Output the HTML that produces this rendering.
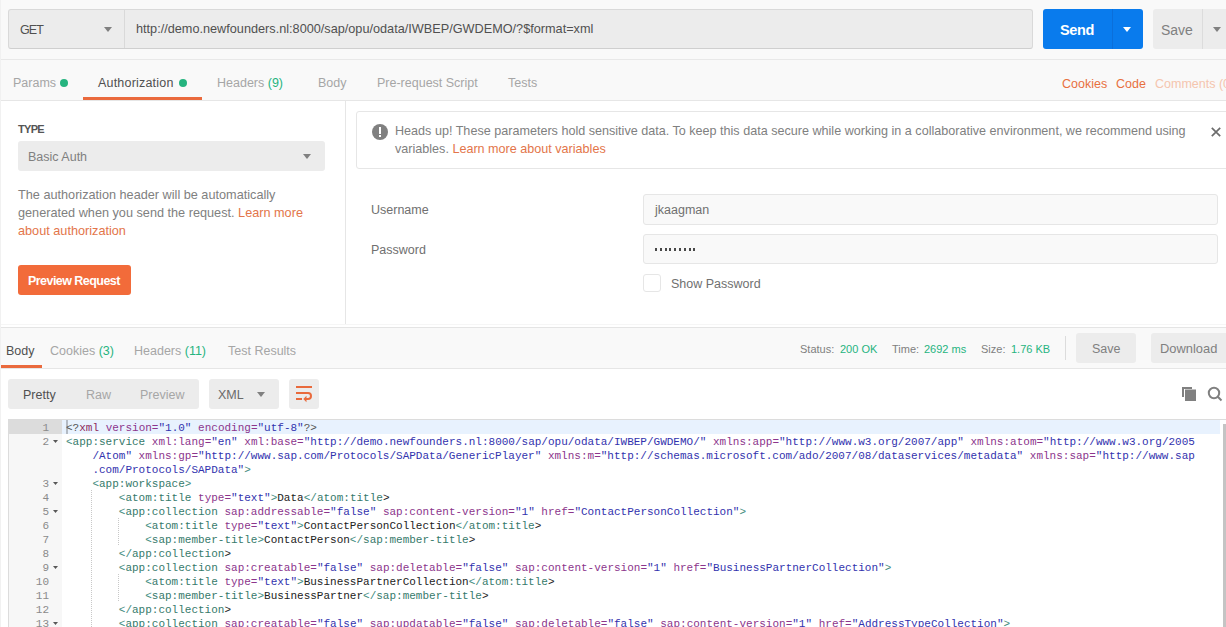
<!DOCTYPE html>
<html><head><meta charset="utf-8">
<style>
*{box-sizing:border-box;margin:0;padding:0}
html,body{width:1226px;height:627px;overflow:hidden;background:#fff}
body{position:relative;font-family:"Liberation Sans",sans-serif;font-size:12.5px;color:#505050}
.a{position:absolute}
.t{position:absolute;white-space:pre;line-height:1}
.bd{position:absolute;background:#e6e6e6}
.green{color:#26b47f}
.orange{color:#e3754a}

#code{position:absolute;left:0;top:0;width:1218px;height:208px;font-family:"Liberation Mono",monospace;font-size:11px;line-height:14px}
.gl{position:absolute;left:0;width:40px;height:14px;padding-top:1px;text-align:right;color:#8a8a8a}
.fw{position:absolute;left:44px;width:5px;height:3px;background:#585858;clip-path:polygon(0 0,100% 0,50% 100%)}
.ln{position:absolute;height:14px;padding-top:1px;white-space:pre;color:#222}
.ig{position:absolute;width:1px;height:14px;background:repeating-linear-gradient(to bottom,#c8c8c8 0,#c8c8c8 1px,transparent 1px,transparent 2px)}
.p{color:#3f8c7e}
.tag{color:#367a6b}
.pi{color:#555}
.decl{color:#8e2a5c}
.at{color:#8c358c}
.eq{color:#8c358c}
.st{color:#3232ae}
.tx{color:#222}
</style></head><body>

<!-- top bar -->
<div class="a" style="left:0;top:0;width:1226px;height:59px;background:#f9f9f9"></div>
<div class="a" style="left:0;top:0;width:1px;height:627px;background:#f0f0f0"></div>
<div class="bd" style="left:0;top:59px;width:1226px;height:1px;background:#e8e8e8"></div>
<!-- GET + url -->
<div class="a" style="left:8px;top:9px;width:1025px;height:40px;background:#ececec;border:1px solid #d9d9d9;border-bottom-color:#cfcfcf;border-radius:3px"></div>
<div class="a" style="left:124px;top:10px;width:1px;height:38px;background:#d9d9d9"></div>
<div class="t" style="left:20px;top:24px;font-size:12.5px;letter-spacing:-0.9px;color:#505050">GET</div>
<div class="a" style="left:104px;top:27px;width:0;height:0;border-left:4px solid transparent;border-right:4px solid transparent;border-top:5px solid #808080"></div>
<div class="t" style="left:136px;top:23px;font-size:12.7px;color:#505050">http://demo.newfounders.nl:8000/sap/opu/odata/IWBEP/GWDEMO/?$format=xml</div>
<!-- send -->
<div class="a" style="left:1043px;top:9px;width:100px;height:40px;background:#097bed;border-radius:3px"></div>
<div class="a" style="left:1112px;top:9px;width:1px;height:40px;background:#0b6fda"></div>
<div class="t" style="left:1060px;top:23px;font-size:14.5px;letter-spacing:-0.4px;font-weight:700;color:#fff">Send</div>
<div class="a" style="left:1123px;top:27px;width:0;height:0;border-left:4px solid transparent;border-right:4px solid transparent;border-top:5px solid #fff"></div>
<!-- save -->
<div class="a" style="left:1153px;top:9px;width:80px;height:40px;background:#ececec;border-radius:3px"></div>
<div class="a" style="left:1202px;top:9px;width:1px;height:40px;background:#dcdcdc"></div>
<div class="t" style="left:1161px;top:23px;font-size:14px;color:#808080">Save</div>
<div class="a" style="left:1213px;top:27px;width:0;height:0;border-left:4px solid transparent;border-right:4px solid transparent;border-top:5px solid #808080"></div>

<!-- request tabs -->
<div class="a" style="left:0;top:60px;width:1226px;height:40px;background:#f9f9f9"></div>
<div class="bd" style="left:0;top:100px;width:1226px;height:1px;background:#e6e6e6"></div>
<div class="t" style="left:13px;top:77px;color:#a6a6a6">Params</div>
<div class="a" style="left:60px;top:79px;width:8px;height:8px;border-radius:50%;background:#26b47f"></div>
<div class="t" style="left:98px;top:77px;letter-spacing:0.2px;color:#505050">Authorization</div>
<div class="a" style="left:179px;top:79px;width:8px;height:8px;border-radius:50%;background:#26b47f"></div>
<div class="a" style="left:83px;top:97px;width:119px;height:3px;background:#ea6a3d"></div>
<div class="t" style="left:217px;top:77px;color:#a6a6a6">Headers <span class="green">(9)</span></div>
<div class="t" style="left:318px;top:77px;color:#a6a6a6">Body</div>
<div class="t" style="left:377px;top:77px;color:#a6a6a6">Pre-request Script</div>
<div class="t" style="left:508px;top:77px;color:#a6a6a6">Tests</div>
<div class="t" style="left:1062px;top:78px;color:#e8703f">Cookies</div>
<div class="t" style="left:1116px;top:78px;color:#e8703f">Code</div>
<div class="t" style="left:1155px;top:78px;color:#f5c5ae">Comments (0)</div>

<!-- auth left panel -->
<div class="a" style="left:345px;top:101px;width:1px;height:224px;background:#e6e6e6"></div>
<div class="t" style="left:18px;top:124px;font-size:11px;font-weight:700;letter-spacing:-0.7px;color:#555">TYPE</div>
<div class="a" style="left:18px;top:141px;width:307px;height:30px;background:#ececec;border-radius:3px"></div>
<div class="t" style="left:28px;top:151px;color:#808080">Basic Auth</div>
<div class="a" style="left:303px;top:154px;width:0;height:0;border-left:4px solid transparent;border-right:4px solid transparent;border-top:5px solid #808080"></div>
<div class="a" style="left:18px;top:186px;width:320px;font-size:12.7px;line-height:18px;color:#808080;white-space:pre">The authorization header will be automatically
generated when you send the request. <span class="orange">Learn more</span>
<span class="orange">about authorization</span></div>
<div class="a" style="left:18px;top:265px;width:113px;height:30px;background:#f26b3a;border-radius:3px"></div>
<div class="t" style="left:28px;top:275px;font-size:12.5px;letter-spacing:-0.55px;font-weight:700;color:#fff">Preview Request</div>

<!-- warning -->
<div class="a" style="left:356px;top:111px;width:880px;height:58px;border:1px solid #e6e6e6;border-radius:3px;background:#fff"></div>
<div class="a" style="left:372px;top:124px;width:16px;height:16px;border-radius:50%;background:#808080"></div>
<div class="a" style="left:379px;top:127px;width:2px;height:7px;background:#fff"></div>
<div class="a" style="left:379px;top:135px;width:2px;height:2px;background:#fff"></div>
<div class="a" style="left:395px;top:122px;font-size:12.6px;line-height:18px;color:#808080;white-space:pre">Heads up! These parameters hold sensitive data. To keep this data secure while working in a collaborative environment, we recommend using
variables. <span class="orange">Learn more about variables</span></div>
<svg class="a" style="left:1210px;top:126px" width="12" height="12" viewBox="0 0 12 12"><path d="M1.8 1.8L10.2 10.2M10.2 1.8L1.8 10.2" stroke="#6c6c6c" stroke-width="1.7"/></svg>

<!-- form -->
<div class="t" style="left:371px;top:204px;color:#707070">Username</div>
<div class="t" style="left:371px;top:244px;color:#707070">Password</div>
<div class="a" style="left:643px;top:194px;width:575px;height:31px;background:#f9f9f9;border:1px solid #e6e6e6;border-radius:3px"></div>
<div class="t" style="left:655px;top:204px;color:#707070">jkaagman</div>
<div class="a" style="left:643px;top:234px;width:575px;height:30px;background:#f9f9f9;border:1px solid #e6e6e6;border-radius:3px"></div>

<div class="a" style="left:655px;top:248px;width:2px;height:3px;background:#484848"></div><div class="a" style="left:660px;top:248px;width:2px;height:3px;background:#484848"></div><div class="a" style="left:665px;top:248px;width:2px;height:3px;background:#484848"></div><div class="a" style="left:669px;top:248px;width:2px;height:3px;background:#484848"></div><div class="a" style="left:674px;top:248px;width:2px;height:3px;background:#484848"></div><div class="a" style="left:679px;top:248px;width:2px;height:3px;background:#484848"></div><div class="a" style="left:684px;top:248px;width:2px;height:3px;background:#484848"></div><div class="a" style="left:689px;top:248px;width:2px;height:3px;background:#484848"></div><div class="a" style="left:693px;top:248px;width:2px;height:3px;background:#484848"></div>
<div class="a" style="left:643px;top:274px;width:18px;height:18px;border:1px solid #e6e6e6;border-radius:3px;background:#fff"></div>
<div class="t" style="left:671px;top:278px;color:#707070">Show Password</div>

<!-- response header -->
<div class="a" style="left:0;top:324px;width:1226px;height:1px;background:#f6f6f6"></div>
<div class="bd" style="left:0;top:327px;width:1226px;height:1px;background:#e4e4e4"></div>
<div class="a" style="left:0;top:328px;width:1226px;height:40px;background:#f9f9f9"></div>
<div class="bd" style="left:0;top:368px;width:1226px;height:1px;background:#e6e6e6"></div>
<div class="t" style="left:6px;top:345px;color:#505050">Body</div>
<div class="a" style="left:0;top:365px;width:42px;height:3px;background:#ea6a3d"></div>
<div class="t" style="left:50px;top:345px;color:#a6a6a6">Cookies <span class="green">(3)</span></div>
<div class="t" style="left:134px;top:345px;color:#a6a6a6">Headers <span class="green">(11)</span></div>
<div class="t" style="left:228px;top:345px;color:#a6a6a6">Test Results</div>

<div class="t" style="left:800px;top:344px;font-size:11px;color:#808080">Status:</div>
<div class="t" style="left:840px;top:344px;font-size:11px;color:#26b47f">200 OK</div>
<div class="t" style="left:892px;top:344px;font-size:11px;color:#808080">Time:</div>
<div class="t" style="left:924px;top:344px;font-size:11px;color:#26b47f">2692 ms</div>
<div class="t" style="left:981px;top:344px;font-size:11px;color:#808080">Size:</div>
<div class="t" style="left:1011px;top:344px;font-size:11px;color:#26b47f">1.76 KB</div>
<div class="a" style="left:1065px;top:336px;width:1px;height:24px;background:#dcdcdc"></div>
<div class="a" style="left:1076px;top:333px;width:60px;height:30px;background:#ececec;border-radius:3px"></div>
<div class="t" style="left:1092px;top:343px;color:#808080">Save</div>
<div class="a" style="left:1151px;top:333px;width:90px;height:30px;background:#ececec;border-radius:3px"></div>
<div class="t" style="left:1160px;top:343px;font-size:12.9px;color:#808080">Download</div>

<!-- toolbar -->
<div class="a" style="left:8px;top:379px;width:191px;height:30px;background:#ececec;border-radius:3px"></div>
<div class="t" style="left:23px;top:389px;color:#505050">Pretty</div>
<div class="t" style="left:86px;top:389px;color:#a6a6a6">Raw</div>
<div class="t" style="left:140px;top:389px;color:#a6a6a6">Preview</div>
<div class="a" style="left:209px;top:379px;width:70px;height:30px;background:#ececec;border-radius:3px"></div>
<div class="t" style="left:218px;top:389px;color:#6a6a6a">XML</div>
<div class="a" style="left:257px;top:392px;width:0;height:0;border-left:4px solid transparent;border-right:4px solid transparent;border-top:5px solid #808080"></div>
<div class="a" style="left:289px;top:379px;width:30px;height:30px;background:#ececec;border-radius:3px"></div>
<svg class="a" style="left:289px;top:379px" width="30" height="30" viewBox="0 0 30 30">
<path d="M7 8H23M7 14H19a3 3 0 0 1 0 6H16.5M7 20H13" fill="none" stroke="#e96a3c" stroke-width="2"/>
<path d="M17.5 16.8L14.3 20L17.5 23.2Z" fill="#e96a3c"/>
</svg>
<svg class="a" style="left:1180px;top:385px" width="18" height="18" viewBox="0 0 18 18">
<path d="M3 12V3H12" fill="none" stroke="#808080" stroke-width="2"/>
<rect x="5" y="4.5" width="11" height="11.5" fill="#808080"/>
</svg>
<svg class="a" style="left:1206px;top:385px" width="18" height="18" viewBox="0 0 18 18">
<circle cx="8" cy="8" r="5.2" fill="none" stroke="#808080" stroke-width="2"/>
<path d="M11.8 11.8L15.5 15.5" stroke="#808080" stroke-width="2"/>
</svg>

<!-- editor -->
<div id="editor" class="a" style="left:8px;top:419px;width:1218px;height:208px;border-top:1px solid #dcdcdc;border-left:1px solid #dcdcdc;background:#fff;overflow:hidden">
<div class="a" style="left:0;top:0;width:53px;height:220px;background:#f7f7f7"></div>
<div class="a" style="left:0;top:0;width:53px;height:14px;background:#dcdcdc"></div>
<div class="a" style="left:53px;top:0;width:1158px;height:14px;background:#e8f2fe"></div>
<div class="a" style="left:57px;top:0;width:2px;height:14px;background:#b4bbc4"></div>
<div class="a" style="left:1214px;top:4px;width:4px;height:210px;background:#c4c4c4"></div>
<div id="code">
<div class="gl act" style="top:0px">1</div>
<div class="ln" style="top:0px;left:57.0px"><span class="pi">&lt;?</span><span class="decl">xml</span> <span class="at">version</span><span class="eq">=</span><span class="st">&quot;1.0&quot;</span> <span class="at">encoding</span><span class="eq">=</span><span class="st">&quot;utf-8&quot;</span><span class="pi">?&gt;</span></div>
<div class="gl" style="top:14px">2</div>
<div class="fw" style="top:20px"></div>
<div class="ln" style="top:14px;left:57.0px"><span class="p">&lt;</span><span class="tag">app:service</span> <span class="at">xml:lang</span><span class="eq">=</span><span class="st">&quot;en&quot;</span> <span class="at">xml:base</span><span class="eq">=</span><span class="st">&quot;http://demo.newfounders.nl:8000/sap/opu/odata/IWBEP/GWDEMO/&quot;</span> <span class="at">xmlns:app</span><span class="eq">=</span><span class="st">&quot;http://www.w3.org/2007/app&quot;</span> <span class="at">xmlns:atom</span><span class="eq">=</span><span class="st">&quot;http://www.w3.org/2005</span></div>
<div class="ln" style="top:28px;left:83.4px"><span class="st">/Atom&quot;</span> <span class="at">xmlns:gp</span><span class="eq">=</span><span class="st">&quot;http://www.sap.com/Protocols/SAPData/GenericPlayer&quot;</span> <span class="at">xmlns:m</span><span class="eq">=</span><span class="st">&quot;http://schemas.microsoft.com/ado/2007/08/dataservices/metadata&quot;</span> <span class="at">xmlns:sap</span><span class="eq">=</span><span class="st">&quot;http://www.sap</span></div>
<div class="ln" style="top:42px;left:83.4px"><span class="st">.com/Protocols/SAPData&quot;</span><span class="p">&gt;</span></div>
<div class="gl" style="top:56px">3</div>
<div class="fw" style="top:62px"></div>
<div class="ln" style="top:56px;left:83.4px"><span class="p">&lt;</span><span class="tag">app:workspace</span><span class="p">&gt;</span></div>
<div class="gl" style="top:70px">4</div>
<div class="ig" style="left:82.0px;top:70px"></div>
<div class="ln" style="top:70px;left:109.8px"><span class="p">&lt;</span><span class="tag">atom:title</span> <span class="at">type</span><span class="eq">=</span><span class="st">&quot;text&quot;</span><span class="p">&gt;</span><span class="tx">Data</span><span class="p">&lt;/</span><span class="tag">atom:title</span><span class="tx">&gt;</span></div>
<div class="gl" style="top:84px">5</div>
<div class="fw" style="top:90px"></div>
<div class="ig" style="left:82.0px;top:84px"></div>
<div class="ln" style="top:84px;left:109.8px"><span class="p">&lt;</span><span class="tag">app:collection</span> <span class="at">sap:addressable</span><span class="eq">=</span><span class="st">&quot;false&quot;</span> <span class="at">sap:content-version</span><span class="eq">=</span><span class="st">&quot;1&quot;</span> <span class="at">href</span><span class="eq">=</span><span class="st">&quot;ContactPersonCollection&quot;</span><span class="p">&gt;</span></div>
<div class="gl" style="top:98px">6</div>
<div class="ig" style="left:82.0px;top:98px"></div>
<div class="ig" style="left:109.0px;top:98px"></div>
<div class="ln" style="top:98px;left:136.2px"><span class="p">&lt;</span><span class="tag">atom:title</span> <span class="at">type</span><span class="eq">=</span><span class="st">&quot;text&quot;</span><span class="p">&gt;</span><span class="tx">ContactPersonCollection</span><span class="p">&lt;/</span><span class="tag">atom:title</span><span class="tx">&gt;</span></div>
<div class="gl" style="top:112px">7</div>
<div class="ig" style="left:82.0px;top:112px"></div>
<div class="ig" style="left:109.0px;top:112px"></div>
<div class="ln" style="top:112px;left:136.2px"><span class="p">&lt;</span><span class="tag">sap:member-title</span><span class="p">&gt;</span><span class="tx">ContactPerson</span><span class="p">&lt;/</span><span class="tag">sap:member-title</span><span class="tx">&gt;</span></div>
<div class="gl" style="top:126px">8</div>
<div class="ig" style="left:82.0px;top:126px"></div>
<div class="ln" style="top:126px;left:109.8px"><span class="p">&lt;/</span><span class="tag">app:collection</span><span class="tx">&gt;</span></div>
<div class="gl" style="top:140px">9</div>
<div class="fw" style="top:146px"></div>
<div class="ig" style="left:82.0px;top:140px"></div>
<div class="ln" style="top:140px;left:109.8px"><span class="p">&lt;</span><span class="tag">app:collection</span> <span class="at">sap:creatable</span><span class="eq">=</span><span class="st">&quot;false&quot;</span> <span class="at">sap:deletable</span><span class="eq">=</span><span class="st">&quot;false&quot;</span> <span class="at">sap:content-version</span><span class="eq">=</span><span class="st">&quot;1&quot;</span> <span class="at">href</span><span class="eq">=</span><span class="st">&quot;BusinessPartnerCollection&quot;</span><span class="p">&gt;</span></div>
<div class="gl" style="top:154px">10</div>
<div class="ig" style="left:82.0px;top:154px"></div>
<div class="ig" style="left:109.0px;top:154px"></div>
<div class="ln" style="top:154px;left:136.2px"><span class="p">&lt;</span><span class="tag">atom:title</span> <span class="at">type</span><span class="eq">=</span><span class="st">&quot;text&quot;</span><span class="p">&gt;</span><span class="tx">BusinessPartnerCollection</span><span class="p">&lt;/</span><span class="tag">atom:title</span><span class="tx">&gt;</span></div>
<div class="gl" style="top:168px">11</div>
<div class="ig" style="left:82.0px;top:168px"></div>
<div class="ig" style="left:109.0px;top:168px"></div>
<div class="ln" style="top:168px;left:136.2px"><span class="p">&lt;</span><span class="tag">sap:member-title</span><span class="p">&gt;</span><span class="tx">BusinessPartner</span><span class="p">&lt;/</span><span class="tag">sap:member-title</span><span class="tx">&gt;</span></div>
<div class="gl" style="top:182px">12</div>
<div class="ig" style="left:82.0px;top:182px"></div>
<div class="ln" style="top:182px;left:109.8px"><span class="p">&lt;/</span><span class="tag">app:collection</span><span class="tx">&gt;</span></div>
<div class="gl" style="top:196px">13</div>
<div class="fw" style="top:202px"></div>
<div class="ig" style="left:82.0px;top:196px"></div>
<div class="ln" style="top:196px;left:109.8px"><span class="p">&lt;</span><span class="tag">app:collection</span> <span class="at">sap:creatable</span><span class="eq">=</span><span class="st">&quot;false&quot;</span> <span class="at">sap:updatable</span><span class="eq">=</span><span class="st">&quot;false&quot;</span> <span class="at">sap:deletable</span><span class="eq">=</span><span class="st">&quot;false&quot;</span> <span class="at">sap:content-version</span><span class="eq">=</span><span class="st">&quot;1&quot;</span> <span class="at">href</span><span class="eq">=</span><span class="st">&quot;AddressTypeCollection&quot;</span><span class="p">&gt;</span></div>
</div>
</div>
</div>
</div>

<div class="a" style="left:0;top:0;width:1px;height:627px;background:#f1f1f1"></div>
</body></html>
